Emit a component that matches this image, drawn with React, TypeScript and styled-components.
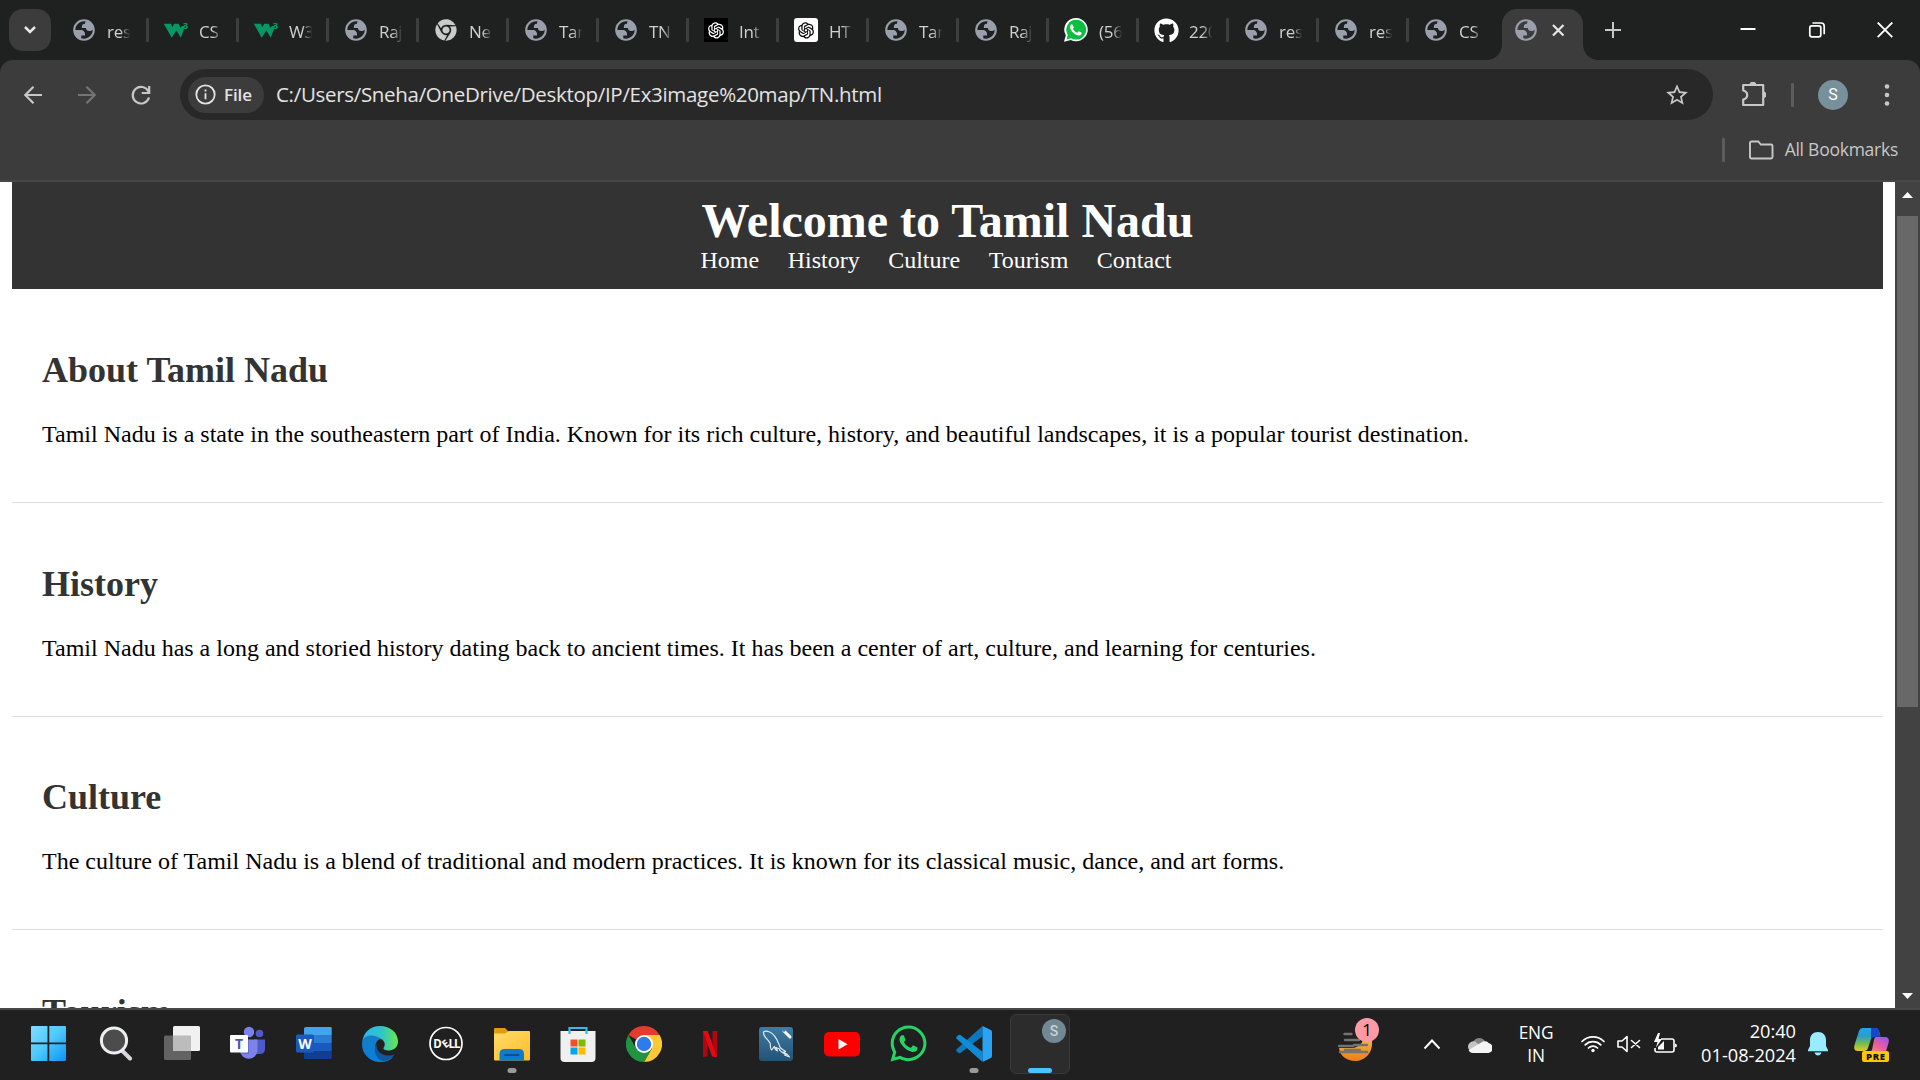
import React from "react";
import styled, { createGlobalStyle, css } from "styled-components";
import { FaChrome, FaGithub, FaWhatsapp } from "react-icons/fa";
import { AiOutlineOpenAI } from "react-icons/ai";

const UI = `"Open Sans", "Noto Sans", sans-serif`;
const SERIF = `"Liberation Serif", "Times New Roman", serif`;

const GlobalStyle = createGlobalStyle`
  *, *::before, *::after { box-sizing: border-box; }
  html, body { margin: 0; padding: 0; background: #202020; overflow: hidden; }
  svg { display: block; flex: none; }
`;

const Screen = styled.div`
  width: 1920px;
  height: 1080px;
  display: flex;
  flex-direction: column;
  overflow: hidden;
  font-family: ${UI};
`;

/* ---------- Tab strip ---------- */
const TabStrip = styled.div`
  height: 60px;
  flex: none;
  display: flex;
  align-items: flex-start;
  padding: 9px 0 0 9px;
  background: #1f2120;
`;
const TabSearch = styled.button`
  width: 42px;
  height: 42px;
  border: 0;
  padding: 0;
  margin-right: 8px;
  border-radius: 14px;
  background: #3c3c3c;
  display: grid;
  place-items: center;
`;
const Tab = styled.div<{ $first?: boolean; $last?: boolean }>`
  width: 90px;
  height: 42px;
  display: flex;
  align-items: center;
  padding-left: ${(p) => (p.$first ? 12 : 14)}px;
  &::after {
    content: "";
    margin-left: auto;
    width: 3px;
    height: 24px;
    border-radius: 1px;
    background: ${(p) => (p.$last ? "transparent" : "#3e3e3e")};
  }
`;
const Favicon = styled.span`
  width: 26px;
  height: 26px;
  display: grid;
  place-items: center;
`;
const TabTitle = styled.span`
  width: 24px;
  margin: 3px 0 0 10px;
  overflow: hidden;
  white-space: nowrap;
  font-size: 17px;
  line-height: 26px;
  letter-spacing: -0.3px;
  color: #d0d0d0;
  mask-image: linear-gradient(to right, #000 55%, transparent 98%);
`;
const ActiveTab = styled.div`
  width: 81px;
  height: 51px;
  margin-left: 3px;
  display: flex;
  align-items: center;
  padding: 0 0 9px 11px;
  border-radius: 15px 15px 0 0;
  background: #3c3c3c;
  position: relative;
  &::before,
  &::after {
    content: "";
    position: absolute;
    bottom: 0;
    width: 15px;
    height: 15px;
  }
  &::before {
    left: -15px;
    background: radial-gradient(circle at 0 0, transparent 14.5px, #3c3c3c 15.2px);
  }
  &::after {
    right: -15px;
    background: radial-gradient(circle at 100% 0, transparent 14.5px, #3c3c3c 15.2px);
  }
`;
const TabClose = styled.span`
  margin-left: 11px;
`;
const NewTab = styled.div`
  margin: 13px 0 0 22px;
`;
const WindowControls = styled.div`
  margin-left: auto;
  height: 42px;
  display: flex;
  align-items: center;
  gap: 44.5px;
  padding-right: 23px;
`;

/* ---------- Toolbar ---------- */
const ToolbarBack = styled.div`
  flex: none;
  height: 122px;
  background: #1f2120;
`;
const Chrome = styled.div`
  height: 122px;
  border-radius: 13px 13px 0 0;
  background: #3c3c3c;
  border-bottom: 2px solid #474747;
`;
const Toolbar = styled.div`
  display: flex;
  align-items: center;
  height: 69px;
`;
const NavButtons = styled.div`
  width: 180px;
  display: flex;
  align-items: center;
  padding-left: 20px;
  gap: 28px;
`;
const Omnibox = styled.div`
  width: 1533px;
  height: 51px;
  border-radius: 26px;
  background: #282828;
  display: flex;
  align-items: center;
  padding: 0 23px 0 8px;
`;
const FileChip = styled.div`
  width: 76px;
  height: 36px;
  border-radius: 18px;
  background: #3c3c3c;
  display: flex;
  align-items: center;
  gap: 8px;
  padding-left: 7px;
  font-size: 17px;
  font-weight: 600;
  letter-spacing: -0.1px;
  color: #e3e3e3;
`;
const Url = styled.span`
  margin-left: 12px;
  padding-bottom: 2px;
  flex: 1;
  font-size: 20.5px;
  letter-spacing: -0.31px;
  white-space: nowrap;
  color: #e3e3e3;
`;
const Divider = styled.span`
  width: 3px;
  height: 24px;
  border-radius: 1px;
  background: #5c5c5c;
`;
const ToolbarEnd = styled.div`
  flex: 1;
  display: flex;
  align-items: center;
  padding-left: 27px;
  gap: 24.5px;
`;
const Avatar = styled.span`
  width: 30px;
  height: 30px;
  margin: 1px 7px 0 0;
  border-radius: 50%;
  background: #78909c;
  color: #fff;
  font: 16px/30px Roboto, sans-serif;
  text-align: center;
`;
const Bookmarks = styled.div`
  height: 42px;
  display: flex;
  align-items: center;
  justify-content: flex-end;
  padding: 0 22px 0 0;
  gap: 11px;
  ${Divider} { margin-right: 13px; }
`;
const BookmarksLabel = styled.span`
  padding-bottom: 2px;
  font-size: 17.5px;
  letter-spacing: -0.25px;
  color: #c7c7c7;
`;

/* ---------- Page ---------- */
const Viewport = styled.div`
  height: 826px;
  flex: none;
  display: flex;
  background: #fff;
`;
const Page = styled.main`
  flex: 1;
  height: 826px;
  overflow: hidden;
  padding: 0 12px;
  font-family: ${SERIF};
  font-size: 24px;
  color: #000;
`;
const PageHeader = styled.header`
  height: 107px;
  background: #333;
  color: #fff;
  display: flex;
  justify-content: center;
  padding-top: 11px;
`;
const PageTitle = styled.h1`
  margin: 0;
  font-size: 48px;
  line-height: 55px;
`;
const PageNav = styled.nav`
  display: flex;
  gap: 28.5px;
  margin-top: -1px;
  margin-left: -1px;
  line-height: 27px;
`;
const Section = styled.section`
  height: 214px;
  padding: 30px;
  border-bottom: 1px solid #ddd;
  &:nth-of-type(3) {
    height: 213px;
    padding-top: 29px;
  }
  &:nth-of-type(4) {
    padding-top: 31px;
  }
`;
const SectionTitle = styled.h2`
  margin: 31px 0 30px;
  font-size: 36px;
  line-height: 41px;
  color: #333;
`;
const Paragraph = styled.p`
  margin: 0;
  line-height: 27px;
  white-space: nowrap;
`;
const Scrollbar = styled.div`
  width: 25px;
  background: #424242;
  display: flex;
  flex-direction: column;
  align-items: center;
  padding: 10px 0 9px;
`;
const Thumb = styled.div`
  width: 21px;
  height: 491px;
  margin: 18px 0 auto;
  background: #686868;
`;

/* ---------- Taskbar ---------- */
const Taskbar = styled.footer`
  flex: 1;
  display: flex;
  border-top: 2px solid #484848;
  background: #202020;
  color: #fff;
`;
const Apps = styled.div`
  display: flex;
  padding-left: 15px;
`;
const AppButton = styled.div<{ $first?: boolean }>`
  width: ${(p) => (p.$first ? 68 : 66)}px;
  height: 68px;
  display: flex;
  justify-content: center;
  position: relative;
  ${(p) => p.$first && css`padding-right: 1px;`}
  & > svg { margin-top: 16px; }
`;
const Running = styled.span<{ $active?: boolean }>`
  position: absolute;
  bottom: ${(p) => (p.$active ? 0 : 5)}px;
  left: 50%;
  width: ${(p) => (p.$active ? 24 : 9)}px;
  height: 5px;
  transform: translateX(-50%);
  border-radius: 3px;
  background: ${(p) => (p.$active ? "#4cc2ff" : "#9a9a9a")};
`;
const ActiveApp = styled.div`
  width: 60px;
  height: 60px;
  margin: 4px 0 0 3px;
  border: 1px solid #393939;
  border-radius: 6px;
  background: #2c2c2c;
  position: relative;
`;
const Badge = styled.span<{ $pink?: boolean }>`
  position: absolute;
  width: 24px;
  height: 24px;
  border-radius: 50%;
  text-align: center;
  ${(p) =>
    p.$pink
      ? css`top: 8px; left: 17px; background: #ff99a4; color: #000; font: 17px/24px ${UI};`
      : css`top: 4px; right: 3px; background: #728894; color: #c8d2d8; font: 500 14px/24px Roboto, sans-serif;`}
`;
const Tray = styled.div`
  margin-left: auto;
  height: 68px;
  display: flex;
  align-items: center;
  padding-right: 31px;
`;
const Widget = styled.div`
  width: 36px;
  height: 68px;
  margin-right: 49px;
  position: relative;
  padding-top: 22px;
`;
const Hidden = styled.div`
  margin-right: 26px;
`;
const Language = styled.div`
  width: 36px;
  margin: 0 27px 0 26px;
  text-align: center;
  font-size: 17.3px;
  line-height: 23px;
  letter-spacing: -0.2px;
`;
const Status = styled.div`
  display: flex;
  align-items: center;
  gap: 12px;
`;
const Clock = styled.div`
  width: 119px;
  margin-right: 12px;
  padding-bottom: 2px;
  text-align: right;
  font-size: 18.2px;
  line-height: 24px;
  white-space: nowrap;
`;
const Copilot = styled.div`
  margin-left: 26px;
`;

/* ---------- Icons ---------- */
const Globe = () => (
  <svg width="26" height="26" viewBox="0 0 24 24" fill="#9aa0ab">
    <path fillRule="evenodd" d="M12 2C6.48 2 2 6.48 2 12s4.48 10 10 10 10-4.48 10-10S17.52 2 12 2zM4 12h4.400c3.407.022 4.922 1.730 4.543 5.127H9.488v2.470a8.004 8.004 0 0 0 10.498-8.083C19.327 12.504 18.332 13 17 13c-2.137 0-3.206-.916-3.206-2.750h-3.748c-.274-2.728.683-4.092 2.870-4.092 0-.975.327-1.597.811-1.970A8.004 8.004 0 0 0 4 12z" />
  </svg>
);
const W3 = () => (
  <svg width="26" height="26" viewBox="0 0 26 26">
    <path d="M.8 6.700h7.200l1.400 3.500 1.700-3.500h4.600l1.600 4 1.800-1.700h2.900l-4.200 11.700-4.500-7.200-4.600 7.200z" fill="#059862" />
    <text x="19.800" y="12" fontFamily={UI} fontSize="9.500" fontWeight="700" fill="#059862">3</text>
  </svg>
);
const Gpt = ({ dark }: { dark?: boolean }) => (
  <svg width="24" height="24" viewBox="0 0 24 24">
    <rect width="24" height="24" rx={dark ? 0 : 3} fill={dark ? "#000" : "#fff"} />
    <g transform="translate(1.500 1.500)"><AiOutlineOpenAI size={21} color={dark ? "#fff" : "#111"} /></g>
  </svg>
);
const WhatsTab = () => (
  <svg width="24" height="24" viewBox="0 0 24 24">
    <path d="M12.200 0a11.600 11.600 0 1 1-5.400 21.900L0 23.800l1.800-6.500A11.600 11.600 0 0 1 12.200 0z" fill="#fff" />
    <path d="M12.200 1.800a9.900 9.900 0 1 1-5 18.400l-4.700 1.200 1.300-4.500A9.900 9.900 0 0 1 12.200 1.800z" fill="#0cbf3f" />
    <path d="M8.300 6.400c-.5-.5-2.400.6-2.200 2.800.3 3.800 5 8.100 8.800 8.300 2 0 3-1.500 2.700-2.700l-2.800-1.500-1.500 1.500c-2-.6-3.600-2.200-4.400-4l1-1.400z" fill="#fff" />
  </svg>
);

const Start = () => (
  <svg width="35" height="35" viewBox="0 0 35 35">
    <defs><linearGradient id="win" x1="0" y1="0" x2="1" y2="1"><stop stopColor="#83dcff" /><stop offset=".5" stopColor="#4cc8fb" /><stop offset="1" stopColor="#0a93f8" /></linearGradient></defs>
    <path d="M1 0h15.500v16.500H0V1q0-1 1-1zM18.300 0H34q1 0 1 1v15.500H18.300zM0 18.300h16.500V35H1q-1 0-1-1zM18.300 18.300H35V34q0 1-1 1H18.300z" fill="url(#win)" />
  </svg>
);
const Search = () => (
  <svg width="34" height="35" viewBox="0 0 34 35">
    <path d="m23.500 25 7.500 7.500" stroke="#d5d8da" strokeWidth="4" strokeLinecap="round" />
    <circle cx="15" cy="14.500" r="12.600" fill="#4c4c4c" stroke="#eceeef" strokeWidth="3" />
  </svg>
);
const TaskView = () => (
  <svg width="36" height="35" viewBox="0 0 36 35">
    <rect y="9.500" width="27" height="24.500" rx="1.500" fill="#636363" />
    <rect x="9" y="0" width="27" height="25" rx="1.500" fill="#f1f1f1" />
    <path d="M9 9.500h18V25H10.500Q9 25 9 23.500z" fill="#bcbcbc" />
  </svg>
);
const Teams = () => (
  <svg width="36" height="35" viewBox="0 0 36 35">
    <circle cx="29.500" cy="7.500" r="3.800" fill="#5059c9" />
    <path d="M24 13.500h11V23q0 5-5.500 5H24z" fill="#5059c9" />
    <circle cx="19" cy="6" r="5.200" fill="#7b83eb" />
    <path d="M10 13.500h17.500V25a8.800 8.800 0 0 1-17.500 0z" fill="#7b83eb" />
    <path d="M10 13.500h9V28h-9z" fill="#3c4392" opacity=".35" />
    <rect y="9" width="18" height="17.500" rx="1" fill="#fff" />
    <text x="9" y="22.500" textAnchor="middle" fontFamily={UI} fontWeight="700" fontSize="14" fill="#4b53bc">T</text>
  </svg>
);
const Word = () => (
  <svg width="36" height="35" viewBox="0 0 36 35">
    <path d="M10 1h24.500q1.200 0 1.200 1.200V9H8V2.500Q8 1 10 1z" fill="#41a5ee" />
    <path d="M8 9h27.700v8H8z" fill="#2b7cd3" /><path d="M8 17h27.700v8H8z" fill="#185abd" />
    <path d="M8 25h27.700v6.500q0 1.500-1.500 1.500H9.500Q8 33 8 31.500z" fill="#103f91" />
    <rect y="8.500" width="18" height="18" rx="1.500" fill="#185abd" />
    <text x="9" y="22.500" textAnchor="middle" fontFamily={UI} fontWeight="700" fontSize="14" fill="#fff">W</text>
  </svg>
);
const Edge = () => (
  <svg width="36" height="36" viewBox="0 0 36 36">
    <defs>
      <linearGradient id="e1" x1="0" x2="1"><stop stopColor="#2fb5ee" /><stop offset=".55" stopColor="#2fc5c6" /><stop offset="1" stopColor="#6be84a" /></linearGradient>
      <linearGradient id="e2" x1="0" y1="0" x2="0" y2="1"><stop stopColor="#137dc7" /><stop offset="1" stopColor="#0b7fdc" /></linearGradient>
    </defs>
    <path d="M.3 15C2 5.500 9 0 18 0c10.500 0 18 7 18 15.500 0 5.500-4 9-9 9-3.500 0-6-1-5.500-2.500 3-4 .5-8.500-4-9.500C10 10 3 10.500.3 15z" fill="url(#e1)" />
    <path d="M.3 15C3 7.500 14 8.500 19 13c-5 .5-7 7-4.500 12.500C17 31 24 33.500 31 31 28 34.500 23 36.500 17 36 6 35-1.500 26 .3 15z" fill="url(#e2)" />
    <path d="M14 17.500c-4 9 2.500 18.500 9 17.500 4.500-1 8-3.800 10-7-5.500 3-14 1.500-17-3.500-1.500-2.500-1.500-5-2-7z" fill="#11569f" />
  </svg>
);
const Dell = () => (
  <svg width="36" height="36" viewBox="0 0 36 36" fill="#fff" fontFamily={UI} fontWeight="700">
    <circle cx="18" cy="17.500" r="16" fill="none" stroke="#fff" strokeWidth="1.700" />
    <text x="5.200" y="21.700" fontSize="11.500">D</text>
    <text transform="translate(17.400 17.800) rotate(-38)" x="0" y="3.800" textAnchor="middle" fontSize="10.500">E</text>
    <text x="20.600" y="21.700" fontSize="11.500" letterSpacing="-1.000">LL</text>
  </svg>
);
const Folder = () => (
  <svg width="36" height="36" viewBox="0 0 36 36">
    <defs><linearGradient id="fd" x1="0" y1="0" x2="1" y2="1"><stop stopColor="#ffdb6b" /><stop offset="1" stopColor="#fdbd2a" /></linearGradient></defs>
    <path d="M0 3q0-1 1-1h10l4 4-4 4H0z" fill="#e09d0b" />
    <path d="M0 7.500h11L15 5h20q1 0 1 1v27.500q0 1-1 1H1q-1 0-1-1z" fill="url(#fd)" />
    <path d="M5.500 34.500V28q0-5 5-5H25q5 0 5 5v6.500z" fill="#0d7ccf" />
    <path d="M11 29h13.500" stroke="#0a4f96" strokeWidth="2" strokeLinecap="round" />
  </svg>
);
const Store = () => (
  <svg width="36" height="36" viewBox="0 0 36 36">
    <path d="M.5 5h35v27q0 4-4 4h-27q-4 0-4-4z" fill="#f0f0f0" />
    <path d="M9.500 8V2h17v6" fill="none" stroke="#36b9f2" strokeWidth="2.200" />
    <path d="M10.500 13.500h7v7h-7z" fill="#f25022" /><path d="M18.500 13.500h7v7h-7z" fill="#7fba00" />
    <path d="M10.500 21.500h7v7h-7z" fill="#00a4ef" /><path d="M18.500 21.500h7v7h-7z" fill="#ffb900" />
  </svg>
);
const ChromeApp = () => (
  <svg width="36" height="36" viewBox="0 0 36 36">
    <path d="M18 18 2.400 9A18 18 0 0 1 33.600 9z" fill="#e33b2e" />
    <path d="M18 9h15.600A18 18 0 0 1 18 36l7.800-13.500z" fill="#fcc934" />
    <path d="M10.200 22.500 2.400 9A18 18 0 0 0 18 36l7.800-13.500z" fill="#229342" />
    <circle cx="18" cy="18" r="9" fill="#fff" /><circle cx="18" cy="18" r="7.200" fill="#2d7bee" />
  </svg>
);
const Netflix = () => (
  <svg width="36" height="36" viewBox="0 0 36 36">
    <path d="M11 5h4.600v25.500l-4.600.5zM20.500 5H25v26l-4.500-.5z" fill="#b1060f" />
    <path d="M11 5h4.600L25 31l-4.900-.6z" fill="#e50914" />
  </svg>
);
const MySql = () => (
  <svg width="36" height="36" viewBox="0 0 36 36">
    <defs><linearGradient id="ms" x1="0" y1="0" x2="0" y2="1"><stop stopColor="#3d7ba6" /><stop offset="1" stopColor="#255273" /></linearGradient></defs>
    <rect x="1" y="1" width="34" height="34" rx="3" fill="url(#ms)" />
    <path d="M5.500 6c3-2 8 0 11 4 3 3.500 4 7 5.500 11 1 2.500 4 3 5.500 4.500l-2 .5c2 1 4.500 2.500 6 5l-5-2 2-.5c-3-1.500-6-2-7.500-6-1 0-2-.5-3-1l1.500 3.500c-2-1-3-3-3-4.500-1.500.5-1.500 3-3 3.500-2-2.500-.5-5-1.500-7C9.500 12.500 5 11 5.500 6z" fill="none" stroke="#dfe9f0" strokeWidth="1.200" strokeLinejoin="round" />
    <path d="m26 5 3 3M29 8l3 3" stroke="#fff" strokeWidth="3" strokeLinecap="round" /><circle cx="26" cy="4.500" r="1.300" fill="#3a779f" />
  </svg>
);
const YouTube = () => (
  <svg width="36" height="36" viewBox="0 0 36 36">
    <rect y="6" width="36" height="24.500" rx="5" fill="#f00" /><path d="m14.500 13 9 5.200-9 5.300z" fill="#fff" />
  </svg>
);
const VsCode = () => (
  <svg width="36" height="36" viewBox="0 0 36 36">
    <path d="M26.500 0v10.200L4.500 27q-1 .6-2 0L.6 25.200q-1-1 0-2z" fill="#0b78bf" />
    <path d="M26.500 36V25.800L4.500 9q-1-.6-2 0L.6 10.800q-1 1 0 2z" fill="#118ad4" />
    <path d="M26.500 0 34.800 4Q36 4.600 36 6v24q0 1.400-1.200 2l-8.300 4q1.200-.5 0-2z" fill="#2aa3f4" />
  </svg>
);
const Weather = () => (
  <svg width="36" height="30" viewBox="0 0 36 30">
    <defs><linearGradient id="wt" x1="0" y1="0" x2="0" y2="1"><stop stopColor="#f1c34c" /><stop offset="1" stopColor="#ed7e16" /></linearGradient></defs>
    <path d="M26 3c0 8-6 13-12 13H1c1 8 8 13 16 13 10 0 18-8 17-20z" fill="url(#wt)" />
    <path d="M6.500 2h7M7 8h14M1 14h14M16 13h13M7 18h15M2 20h27" stroke="#74736f" strokeWidth="2.400" strokeLinecap="round" />
  </svg>
);
const Cloud = () => (
  <svg width="25" height="17" viewBox="0 0 25 17">
    <path d="M6 6a7 7 0 0 1 12-1l-8 6z" fill="#858585" />
    <path d="M1.500 13A5.500 5.500 0 0 1 8 5.500l11 8-14 1z" fill="#c4c4c4" />
    <path d="m10 9 6-3.500c4-1 5 .5 5.500 1.500A5 5 0 0 1 20 17H6a5 5 0 0 1-4.500-3z" fill="#f4f4f4" />
  </svg>
);
const Wifi = () => (
  <svg width="24" height="18" viewBox="0 0 24 18" fill="none" stroke="#fff" strokeWidth="1.700" strokeLinecap="round">
    <path d="M1 6.500a15.500 15.500 0 0 1 22 0M4.200 9.800a11 11 0 0 1 15.600 0M7.500 13a6.500 6.500 0 0 1 9 0" /><circle cx="12" cy="15.500" r="1.700" fill="#fff" stroke="none" />
  </svg>
);
const Mute = () => (
  <svg width="24" height="18" viewBox="0 0 24 18" fill="none" stroke="#fff" strokeWidth="1.600" strokeLinejoin="round">
    <path d="M1 6h4l5-4.500v15L5 12H1zM14.500 5.500l8 7M22.500 5.500l-8 7" strokeLinecap="round" />
  </svg>
);
const Battery = () => (
  <svg width="24" height="22" viewBox="0 0 24 22">
    <path d="M8 6h11q2 0 2 2v9q0 2-2 2H4q-2 0-2-2v-2" fill="none" stroke="#fff" strokeWidth="1.600" />
    <path d="M22 10.500q2 .5 2 2t-2 2zM5 16.500V14l6-6v8.500z" fill="#fff" />
    <path d="M5 0 1 9h3.500L3 14.500 9 6H5.500L7 0z" fill="#fff" />
  </svg>
);
const Bell = () => (
  <svg width="20" height="24" viewBox="0 0 20 24" fill="#99ebff">
    <path d="M10 0c5 0 8 3.500 8 8v6l2 4v1.200H0V18l2-4V8c0-4.500 3-8 8-8zM6.500 20.500h7q-1 3-3.500 3t-3.500-3z" />
  </svg>
);
const CopilotIcon = () => (
  <svg width="35" height="35" viewBox="0 0 35 35">
    <defs>
      <linearGradient id="c1" x1="0" y1="0" x2="0" y2="1"><stop stopColor="#22a7ee" /><stop offset=".35" stopColor="#2b9ccb" /><stop offset=".7" stopColor="#7bbd4c" /><stop offset="1" stopColor="#e8cc22" /></linearGradient>
      <linearGradient id="c2" x1=".8" y1="0" x2="0" y2="1"><stop stopColor="#a453e8" /><stop offset=".5" stopColor="#ec5f9b" /><stop offset="1" stopColor="#fb9b5c" /></linearGradient>
    </defs>
    <path d="M9 1h12q3 0 4 3l1.500 5H21q-3 0-4 3l-3 9q-1 3-4 3H4q-5 0-3.500-6L5 4q1-3 4-3z" fill="url(#c1)" />
    <path d="M17 1h4q3 0 4 3l1.500 6H21q-3 0-4 3z" fill="#1b46c2" />
    <path d="M22 10h9q5 0 3.500 6l-3 10H14q3-1 4-3l2-10q.5-3 2-3z" fill="url(#c2)" />
    <rect x="8" y="24" width="27" height="11" rx="2" fill="#ffc800" />
    <text x="21.500" y="33" textAnchor="middle" fontFamily={UI} fontSize="9.500" fontWeight="800" fill="#111" textLength="19">PRE</text>
  </svg>
);

const tabs: [React.ReactNode, string][] = [
  [<Globe />, "res"], [<W3 />, "CS"], [<W3 />, "W3"], [<Globe />, "Raj"],
  [<FaChrome size={22} color="#c9cbcb" />, "Ne"], [<Globe />, "Tam"], [<Globe />, "TN"], [<Gpt dark />, "Int"],
  [<Gpt />, "HT"], [<Globe />, "Tam"], [<Globe />, "Raj"], [<WhatsTab />, "(56"],
  [<FaGithub size={25} color="#fff" />, "220"], [<Globe />, "res"], [<Globe />, "res"], [<Globe />, "CS"],
];

const sections = [
  ["About Tamil Nadu", "Tamil Nadu is a state in the southeastern part of India. Known for its rich culture, history, and beautiful landscapes, it is a popular tourist destination."],
  ["History", "Tamil Nadu has a long and storied history dating back to ancient times. It has been a center of art, culture, and learning for centuries."],
  ["Culture", "The culture of Tamil Nadu is a blend of traditional and modern practices. It is known for its classical music, dance, and art forms."],
  ["Tourism", ""],
];

const WhatsApp = styled(FaWhatsapp)`
  && { margin-top: 13px; }
`;

const apps: [React.ReactNode, boolean?][] = [
  [<Start />], [<Search />], [<TaskView />], [<Teams />], [<Word />], [<Edge />], [<Dell />],
  [<Folder />, true], [<Store />], [<ChromeApp />], [<Netflix />], [<MySql />], [<YouTube />],
  [<WhatsApp size={41} color="#25d366" />], [<VsCode />, true],
];

export default function App() {
  return (
    <Screen>
      <GlobalStyle />
      <TabStrip>
        <TabSearch>
          <svg width="14" height="10" viewBox="0 0 14 10"><path d="m2 2 5 5 5-5" fill="none" stroke="#e8e8e8" strokeWidth="2.500" /></svg>
        </TabSearch>
        {tabs.map(([icon, title], i) => (
          <Tab key={i} $first={i === 0} $last={i === tabs.length - 1}>
            <Favicon>{icon}</Favicon>
            <TabTitle>{title}</TabTitle>
          </Tab>
        ))}
        <ActiveTab>
          <Favicon><Globe /></Favicon>
          <TabClose>
            <svg width="16" height="16" viewBox="0 0 16 16"><path d="m3 3 10.500 10.500M13.500 3 3 13.500" stroke="#e6e6e6" strokeWidth="2.200" /></svg>
          </TabClose>
        </ActiveTab>
        <NewTab>
          <svg width="16" height="16" viewBox="0 0 16 16"><path d="M8 0v16M0 8h16" stroke="#c7c7c7" strokeWidth="2" /></svg>
        </NewTab>
        <WindowControls>
          <svg width="24" height="16" viewBox="0 0 24 16"><path d="M4.500 7h15" stroke="#fff" strokeWidth="2" /></svg>
          <svg width="24" height="16" viewBox="0 0 24 16" fill="none" stroke="#fff" strokeWidth="1.700">
            <rect x="4.800" y="3.800" width="11" height="11" rx="2" /><path d="M7.500 1H16q3.200 0 3.200 3.200v8" />
          </svg>
          <svg width="24" height="16" viewBox="0 0 24 16"><path d="m4.700.5 14.600 14.600M19.300.5 4.700 15.100" stroke="#fff" strokeWidth="1.800" /></svg>
        </WindowControls>
      </TabStrip>

      <ToolbarBack>
        <Chrome>
          <Toolbar>
            <NavButtons>
              <svg width="26" height="24" viewBox="0 0 26 24" fill="none" stroke="#c7c7c7" strokeWidth="2.200"><path d="M22 12H6M13.500 3.800 5.300 12l8.200 8.200" /></svg>
              <svg width="26" height="24" viewBox="0 0 26 24" fill="none" stroke="#757575" strokeWidth="2.200"><path d="M4 12h16M12.500 3.800l8.200 8.200-8.200 8.200" /></svg>
              <svg width="26" height="24" viewBox="0 0 26 24" fill="none" stroke="#c7c7c7" strokeWidth="2.200"><path d="M21 14.500A8.300 8.300 0 1 1 20.500 8.500M21.200 3v7h-7.500" /></svg>
            </NavButtons>
            <Omnibox>
              <FileChip>
                <svg width="21" height="21" viewBox="0 0 21 21"><circle cx="10.500" cy="10.500" r="9.200" fill="none" stroke="#e3e3e3" strokeWidth="1.800" /><path d="M10.500 9.300v6M10.500 5.500v2" stroke="#e3e3e3" strokeWidth="1.800" /></svg>
                File
              </FileChip>
              <Url>C:/Users/Sneha/OneDrive/Desktop/IP/Ex3image%20map/TN.html</Url>
              <svg width="26" height="26" viewBox="0 0 24 24" fill="#c7c7c7"><path d="m22 9.240-7.190-.62L12 2 9.190 8.630 2 9.240l5.460 4.730L5.820 21 12 17.270 18.180 21l-1.630-7.030zM12 15.400l-3.760 2.270 1-4.280-3.320-2.880 4.380-.38L12 6.100l1.710 4.040 4.380.38-3.320 2.880 1 4.280z" /></svg>
            </Omnibox>
            <ToolbarEnd>
              <svg width="26" height="26" viewBox="0 0 26 26">
                <path d="M3.500 4.500h20v20h-20v-5.500q4-1 4-4.500t-4-4.500z" transform="translate(-.3 -1.500)" fill="none" stroke="#c7c7c7" strokeWidth="2.200" strokeLinejoin="round" />
                <path d="M9.500 3a3.400 3.400 0 0 1 6.800 0zM23 9.500a3.400 3.400 0 0 1 0 6.800z" fill="#c7c7c7" />
              </svg>
              <Divider />
              <Avatar>S</Avatar>
              <svg width="14" height="24" viewBox="0 0 14 24" fill="#c7c7c7"><circle cx="7" cy="3.500" r="2.300" /><circle cx="7" cy="12" r="2.300" /><circle cx="7" cy="20.500" r="2.300" /></svg>
            </ToolbarEnd>
          </Toolbar>
          <Bookmarks>
            <Divider />
            <svg width="25" height="20" viewBox="0 0 25 20"><path d="M2.500 1.500h6.800l2.500 3H22q1.500 0 1.500 1.500v11q0 1.500-1.500 1.500H2.500Q1 18.500 1 17V3q0-1.500 1.500-1.500z" fill="none" stroke="#c7c7c7" strokeWidth="1.900" /></svg>
            <BookmarksLabel>All Bookmarks</BookmarksLabel>
          </Bookmarks>
        </Chrome>
      </ToolbarBack>

      <Viewport>
        <Page>
          <PageHeader>
            <div>
              <PageTitle>Welcome to Tamil Nadu</PageTitle>
              <PageNav>
                {["Home", "History", "Culture", "Tourism", "Contact"].map((n) => <span key={n}>{n}</span>)}
              </PageNav>
            </div>
          </PageHeader>
          {sections.map(([title, text]) => (
            <Section key={title}>
              <SectionTitle>{title}</SectionTitle>
              <Paragraph>{text}</Paragraph>
            </Section>
          ))}
        </Page>
        <Scrollbar>
          <svg width="11" height="6" viewBox="0 0 11 6"><path d="M0 6 5.500 0 11 6z" fill="#fff" /></svg>
          <Thumb />
          <svg width="11" height="6" viewBox="0 0 11 6"><path d="M0 0h11L5.500 6z" fill="#fff" /></svg>
        </Scrollbar>
      </Viewport>

      <Taskbar>
        <Apps>
          {apps.map(([icon, running], i) => (
            <AppButton key={i} $first={i === 0}>
              {icon}
              {running && <Running />}
            </AppButton>
          ))}
          <ActiveApp>
            <Badge>S</Badge>
            <Running $active />
          </ActiveApp>
        </Apps>
        <Tray>
          <Widget><Weather /><Badge $pink>1</Badge></Widget>
          <Hidden>
            <svg width="18" height="12" viewBox="0 0 18 12"><path d="m1.500 10.500 7.500-8 7.500 8" fill="none" stroke="#fff" strokeWidth="1.900" /></svg>
          </Hidden>
          <Cloud />
          <Language>ENG<br />IN</Language>
          <Status><Wifi /><Mute /><Battery /></Status>
          <Clock>20:40<br />01-08-2024</Clock>
          <Bell />
          <Copilot><CopilotIcon /></Copilot>
        </Tray>
      </Taskbar>
    </Screen>
  );
}
